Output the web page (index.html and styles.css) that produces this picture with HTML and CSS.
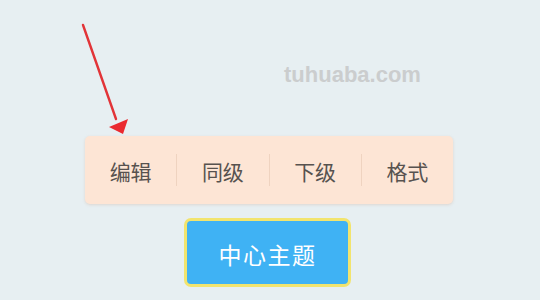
FILE: index.html
```html
<!DOCTYPE html>
<html>
<head>
<meta charset="utf-8">
<link rel="stylesheet" href="styles.css">
</head>
<body>
<div class="stage">
  <div class="watermark">tuhuaba.com</div>
  <svg class="arrow" width="540" height="300" viewBox="0 0 540 300">
    <line x1="83" y1="25" x2="116" y2="119" stroke="#e23438" stroke-width="2.4" stroke-linecap="round"/>
    <polygon points="109,127 128,119 123,134" fill="#ea2a30"/>
  </svg>
  <div class="toolbar">
    <div class="item">编辑</div>
    <div class="sep"></div>
    <div class="item">同级</div>
    <div class="sep"></div>
    <div class="item">下级</div>
    <div class="sep"></div>
    <div class="item">格式</div>
  </div>
  <div class="topic">中心主题</div>
</div>
</body>
</html>
```
FILE: styles.css
```css
html, body {
  margin: 0;
  padding: 0;
}
body {
  background: #e7eff2;
  font-family: "Noto Sans CJK SC", "Noto Sans", sans-serif;
}
.stage {
  position: relative;
  width: 540px;
  height: 300px;
  overflow: hidden;
  display: flex;
  flex-direction: column;
  align-items: flex-start;
  padding-top: 136px;
  box-sizing: border-box;
}
.watermark {
  position: absolute;
  left: 284px;
  top: 62px;
  font-family: "Liberation Sans", Arial, sans-serif;
  font-weight: bold;
  font-size: 22px;
  color: #cbcdce;
}
.arrow {
  position: absolute;
  left: 0;
  top: 0;
}
.toolbar {
  margin-left: 85px;
  width: 368px;
  height: 68px;
  background: #fde5d5;
  border-radius: 5px;
  box-shadow: 0 1px 3px rgba(200, 170, 150, 0.35);
  display: flex;
  align-items: center;
}
.item {
  flex: 1;
  text-align: center;
  font-size: 21px;
  color: #57524f;
  line-height: 68px;
  padding-top: 2px;
}
.sep {
  width: 1px;
  height: 32px;
  background: #efd3c0;
}
.topic {
  margin-top: 14px;
  margin-left: 184px;
  width: 167px;
  height: 69px;
  box-sizing: border-box;
  border: 3px solid #f2e46e;
  border-radius: 7px;
  background: #3fb2f4;
  color: #ffffff;
  font-size: 23px;
  display: flex;
  align-items: center;
  justify-content: center;
  letter-spacing: 1.5px;
  padding-top: 3px;
}
```
